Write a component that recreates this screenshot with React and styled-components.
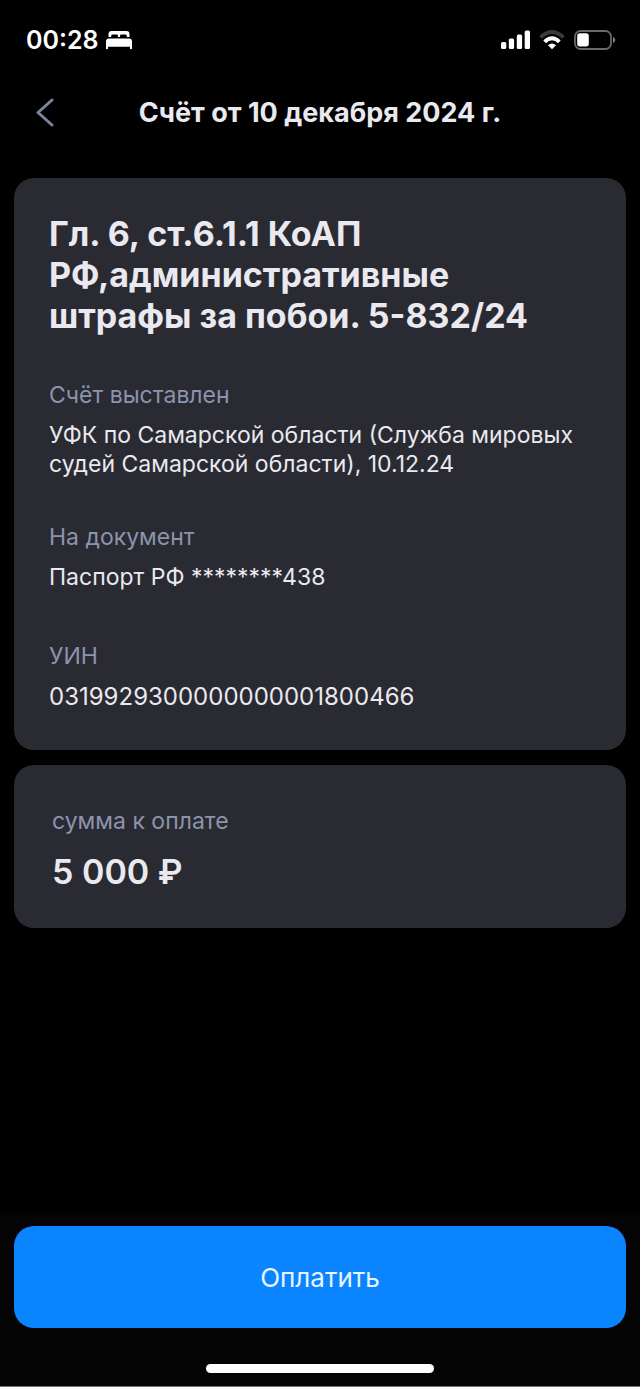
import styled, { createGlobalStyle } from 'styled-components'

const payee = [
    { label: 'Счёт выставлен', value: 'УФК по Самарской области (Служба мировых судей Самарской области), 10.12.24' },
    { label: 'На документ', value: 'Паспорт РФ ********438' },
]

const BedIcon = () => (
    <svg width='26' height='20' viewBox='0 0 26 20' fill='#fff' aria-hidden='true'>
        <path d='M2.500 7V4Q2.500 1 5.500 1H20.500Q23.500 1 23.500 4V7H20.800V6Q20.800 4.600 19.400 4.600H15.400Q14 4.600 14 6V7H12V6Q12 4.600 10.600 4.600H6.600Q5.200 4.600 5.200 6V7Z' />
        <path d='M3 8.500H23Q26 8.500 26 11.500V18.500Q26 19.300 25 19.300T24 18.500V16.800H2V18.500Q2 19.300 1 19.300T0 18.500V11.500Q0 8.500 3 8.500Z' />
    </svg>
)

const SignalIcon = () => (
    <svg width='29' height='20' viewBox='0 0 29 20' fill='#fff' aria-hidden='true'>
        <rect x='0' y='12' width='5.300' height='7' rx='1.600' />
        <rect x='7.800' y='8.500' width='5.300' height='10.500' rx='1.600' />
        <rect x='15.800' y='4.500' width='5.300' height='14.500' rx='1.600' />
        <rect x='23.700' y='0.500' width='5.300' height='18.500' rx='1.600' />
    </svg>
)

const WifiIcon = () => (
    <svg width='26' height='20' viewBox='0 0 26 20' fill='none' strokeWidth='3.8' aria-hidden='true'>
        <path d='M1.500 7.300Q13 -3.200 24.500 7.300' stroke='#3a3a3c' />
        <path d='M5.600 11.800Q13 4.900 20.400 11.800' stroke='#fff' />
        <path d='M9 15.200Q13 11.600 17 15.200L13 19.200Z' fill='#fff' />
    </svg>
)

const BatteryIcon = () => (
    <svg width='42' height='20' viewBox='0 0 42 20' aria-hidden='true'>
        <rect x='1' y='1' width='36' height='18' rx='5.500' fill='none' stroke='#69696b' strokeWidth='1.800' />
        <rect x='3.200' y='3.200' width='11.600' height='13.200' rx='2.600' fill='#fff' />
        <path d='M39 6.800Q41.300 8 41.300 10T39 13.200Z' fill='#7c7c7e' />
    </svg>
)

const Field = ({ label, value }) => (
    <StyledField>
        <dt>{label}</dt>
        <dd>{value}</dd>
    </StyledField>
)

const App = () => {

    return (
        <Page>
            <GlobalStyle />
            <StatusBar>
                <Clock>
                    <span>00:28</span>
                    <BedIcon />
                </Clock>
                <Indicators>
                    <SignalIcon />
                    <WifiIcon />
                    <BatteryIcon />
                </Indicators>
            </StatusBar>
            <Header>
                <BackButton type='button' aria-label='Назад'>
                    <svg width='18' height='30' viewBox='0 0 18 30' fill='none' aria-hidden='true'>
                        <path d='M16 2L2 14.500L16 27' stroke='#78859b' strokeWidth='3' strokeLinecap='round' strokeLinejoin='round' />
                    </svg>
                </BackButton>
                <Title>Счёт от 10 декабря 2024 г.</Title>
            </Header>
            <Main>
                <Card>
                    <Subject>Гл. 6, ст.6.1.1 КоАП РФ,административные штрафы за побои. 5-832/24</Subject>
                    <Fields>
                        {payee.map((item) => (
                            <Field key={item.label} label={item.label} value={item.value} />
                        ))}
                    </Fields>
                    <Reference>
                        <Field label='УИН' value='0319929300000000001800466' />
                    </Reference>
                </Card>
                <AmountCard>
                    <AmountLabel>сумма к оплате</AmountLabel>
                    <Amount>5 000 ₽</Amount>
                </AmountCard>
            </Main>
            <Footer>
                <PayButton type='button'>Оплатить</PayButton>
                <HomeIndicator />
            </Footer>
        </Page>
    )

}


const GlobalStyle = createGlobalStyle `
    * {
        box-sizing: border-box;
        margin: 0;
    }
    body {
        background: #000;
        color: #e9e9ef;
        font-family: Inter, "Liberation Sans", sans-serif;
    }
    svg {
        display: block;
    }
`

const Page = styled.div `
    display: flex;
    flex-direction: column;
    min-height: 100vh;
`

const StatusBar = styled.div `
    display: flex;
    align-items: center;
    justify-content: space-between;
    height: 80px;
    padding: 0 24px 0 26px;
`

const Clock = styled.div `
    display: flex;
    align-items: center;
    gap: 7px;
    color: #fff;
    font-size: 25px;
    font-weight: 600;
`

const Indicators = styled.div `
    display: flex;
    align-items: center;
    gap: 9px;
`

const Header = styled.header `
    display: grid;
    grid-template-columns: 60px 1fr 60px;
    align-items: center;
    height: 66px;
    padding: 0 14px;
`

const BackButton = styled.button `
    display: flex;
    align-items: center;
    height: 60px;
    padding: 0 0 0 22px;
    border: 0;
    background: none;
    cursor: pointer;
`

const Title = styled.h1 `
    text-align: center;
    font-size: 27px;
    font-weight: 700;
    line-height: 32px;
`

const Main = styled.main `
    display: flex;
    flex: 1;
    flex-direction: column;
    gap: 15px;
    padding: 32px 14px;
`

const Card = styled.section `
    padding: 35px 35px 39px;
    border-radius: 20px;
    background: #2a2a32;
`

const AmountCard = styled(Card) `
    padding: 42px 38px 36px;
`

const Subject = styled.h2 `
    font-size: 34px;
    font-weight: 700;
    line-height: 41px;
`

const Fields = styled.dl `
    display: flex;
    flex-direction: column;
    gap: 44px;
    padding-top: 45px;
`

const Reference = styled.dl `
    padding-top: 50px;
    dd {
        font-size: 24px;
    }
`

const StyledField = styled.div `
    display: flex;
    flex-direction: column;
    gap: 11px;
    font-size: 23px;
    line-height: 29px;
    dt {
        color: #8b94ac;
    }
`

const AmountLabel = styled.p `
    color: #8b94ac;
    font-size: 23px;
    line-height: 29px;
`

const Amount = styled.p `
    padding-top: 15px;
    font-size: 34px;
    font-weight: 600;
    line-height: 41px;
`

const Footer = styled.footer `
    display: flex;
    flex-direction: column;
    align-items: center;
    gap: 36px;
    padding: 13px 14px;
    border-bottom: 1px solid #77777a;
    background: #040404;
`

const PayButton = styled.button `
    width: 100%;
    height: 102px;
    border: 0;
    border-radius: 20px;
    background: #0b84ff;
    color: #e9f5ff;
    font-family: inherit;
    font-size: 26px;
    cursor: pointer;
`

const HomeIndicator = styled.div `
    width: 228px;
    height: 9px;
    border-radius: 5px;
    background: #fff;
`

export default App
